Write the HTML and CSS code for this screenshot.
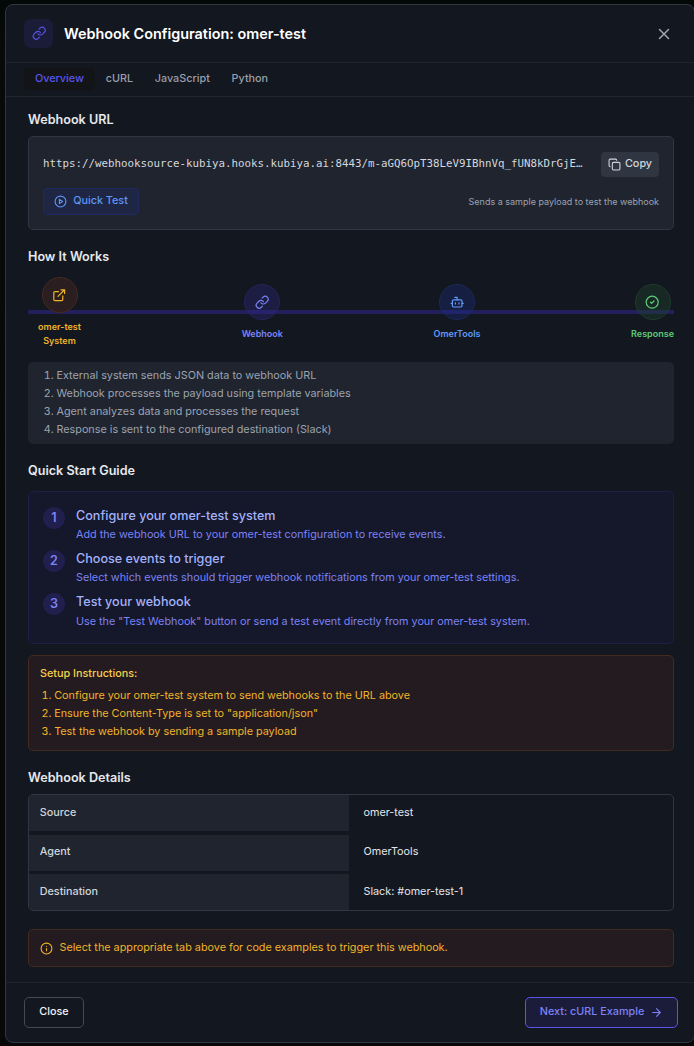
FILE: index.html
```html
<!DOCTYPE html>
<html lang="en">
<head>
<meta charset="utf-8">
<title>Webhook Configuration</title>
<link rel="stylesheet" href="styles.css">
</head>
<body>
<svg width="0" height="0" class="defs">
  <symbol id="link" viewBox="0 0 24 24"><path d="M10 13a5 5 0 0 0 7.54.54l3-3a5 5 0 0 0-7.07-7.07l-1.72 1.71"/><path d="M14 11a5 5 0 0 0-7.54-.54l-3 3a5 5 0 0 0 7.07 7.07l1.71-1.71"/></symbol>
</svg>
<main class="modal">
  <header class="header">
    <span class="badge"><svg class="icon i15"><use href="#link"/></svg></span>
    <h1 class="title">Webhook Configuration: omer-test</h1>
    <svg class="icon close-x" viewBox="0 0 24 24"><path d="M18 6 6 18M6 6l12 12"/></svg>
  </header>
  <nav class="tabs">
    <span class="tab active">Overview</span><span class="tab">cURL</span><span class="tab">JavaScript</span><span class="tab">Python</span>
  </nav>
  <div class="content">
    <h2 class="heading">Webhook URL</h2>
    <section class="url-box">
      <div class="row">
        <code class="url">https://webhooksource-kubiya.hooks.kubiya.ai:8443/m-aGQ6OpT38LeV9IBhnVq_fUN8kDrGjE…</code>
        <button class="copy"><svg class="icon i14" viewBox="0 0 24 24"><rect x="8" y="8" width="14" height="14" rx="2"/><path d="M4 16c-1.1 0-2-.9-2-2V4c0-1.1.9-2 2-2h10c1.1 0 2 .9 2 2"/></svg><span>Copy</span></button>
      </div>
      <div class="row">
        <button class="quick"><svg class="icon i14" viewBox="0 0 24 24"><circle cx="12" cy="12" r="10"/><path d="m10 8 6 4-6 4z"/></svg><span>Quick Test</span></button>
        <span class="hint">Sends a sample payload to test the webhook</span>
      </div>
    </section>

    <h2 class="heading how">How It Works</h2>
    <section class="flow">
      <div class="step amber"><span class="node"><svg class="icon i15" viewBox="0 0 24 24"><path d="M15 3h6v6M10 14 21 3M18 13v6a2 2 0 0 1-2 2H5a2 2 0 0 1-2-2V8a2 2 0 0 1 2-2h6"/></svg></span><span class="label">omer-test<br>System</span></div>
      <div class="step indigo"><span class="node"><svg class="icon i15"><use href="#link"/></svg></span><span class="label">Webhook</span></div>
      <div class="step blue"><span class="node"><svg class="icon i15" viewBox="0 0 24 24"><path d="M12 8V4H8"/><rect x="4" y="8" width="16" height="12" rx="2"/><path d="M2 14h2M20 14h2M15 13v2M9 13v2"/></svg></span><span class="label">OmerTools</span></div>
      <div class="step green"><span class="node"><svg class="icon i15" viewBox="0 0 24 24"><circle cx="12" cy="12" r="10"/><path d="m9 12 2 2 4-4"/></svg></span><span class="label">Response</span></div>
    </section>
    <ol class="summary">
      <li>External system sends JSON data to webhook URL</li>
      <li>Webhook processes the payload using template variables</li>
      <li>Agent analyzes data and processes the request</li>
      <li>Response is sent to the configured destination (Slack)</li>
    </ol>

    <h2 class="heading guide-heading">Quick Start Guide</h2>
    <section class="guide">
      <div class="guide-item"><span class="num">1</span><div><h3>Configure your omer-test system</h3><p>Add the webhook URL to your omer-test configuration to receive events.</p></div></div>
      <div class="guide-item"><span class="num">2</span><div><h3>Choose events to trigger</h3><p>Select which events should trigger webhook notifications from your omer-test settings.</p></div></div>
      <div class="guide-item"><span class="num">3</span><div><h3>Test your webhook</h3><p>Use the "Test Webhook" button or send a test event directly from your omer-test system.</p></div></div>
    </section>
    <section class="setup">
      <h3>Setup Instructions:</h3>
      <ol>
        <li>Configure your omer-test system to send webhooks to the URL above</li>
        <li>Ensure the Content-Type is set to "application/json"</li>
        <li>Test the webhook by sending a sample payload</li>
      </ol>
    </section>

    <h2 class="heading details-heading">Webhook Details</h2>
    <dl class="details">
      <dt>Source</dt><dd>omer-test</dd>
      <dt class="mid">Agent</dt><dd class="mid">OmerTools</dd>
      <dt>Destination</dt><dd>Slack: #omer-test-1</dd>
    </dl>
    <section class="notice"><svg class="icon i14" viewBox="0 0 24 24"><circle cx="12" cy="12" r="10"/><path d="M12 16v-4M12 8h.01"/></svg><span>Select the appropriate tab above for code examples to trigger this webhook.</span></section>
  </div>
  <footer class="footer">
    <button class="btn">Close</button>
    <button class="btn next"><span>Next: cURL Example</span><svg class="icon i14" viewBox="0 0 24 24"><path d="M5 12h14M12 5l7 7-7 7"/></svg></button>
  </footer>
</main>
</body>
</html>
```
FILE: styles.css
```css
* { box-sizing: border-box; }
body {
  margin: 0;
  width: 694px;
  height: 1046px;
  overflow: hidden;
  padding: 4px 0 0 5px;
  background: linear-gradient(#040807, #08090b 60px, #07080a 500px, #08080a);
  font: 500 10.8px/16px Inter, sans-serif;
  color: #e2e5ea;
}
h1, h2, h3, p, ol, dl, dd { margin: 0; padding: 0; }
button { font: inherit; color: inherit; margin: 0; padding: 0; }
.defs { position: absolute; }
.modal {
  width: 690px;
  height: 1039px;
  border: 1px solid #2f3642;
  border-radius: 8px;
  background: #131720;
  display: flex;
  flex-direction: column;
}
.icon { flex: none; fill: none; stroke: currentColor; stroke-width: 2; stroke-linecap: round; stroke-linejoin: round; }
.i14 { width: 13px; height: 13px; }
.i15 { width: 14.4px; height: 14.4px; }

.header { height: 58px; flex: none; border-bottom: 1px solid #1f2430; padding: 0 21px 0 18px; display: flex; align-items: center; }
.badge { width: 29px; height: 29px; border-radius: 7px; background: #1b1c38; color: #5552e4; display: grid; place-items: center; }
.badge .icon { margin-left: 1px; }
.title { font-size: 14.4px; font-weight: 600; color: #fff; margin-left: 11px; }
.close-x { width: 18px; height: 18px; margin-left: auto; color: #a0a5b0; }
.tabs { height: 34px; flex: none; border-bottom: 1px solid #1f2430; padding: 5px 0 0 18px; display: flex; }
.tab { height: 22px; line-height: 21px; padding: 0 10.9px; color: #9a9fab; border-radius: 5px; }
.tab.active { color: #5a54ee; background: #131418; }

.content { padding: 14px 20px 0 22px; width: 688px; height: 885px; flex: none; }
.heading { font-size: 12.6px; line-height: 18px; font-weight: 600; color: #e6e8ec; }
.url-box { height: 94px; margin-top: 7px; border: 1px solid #2f3643; border-radius: 5px; background: #1f242f; padding: 15px 14px 0; }
.row { display: flex; justify-content: space-between; align-items: center; }
.row + .row { margin-top: 11px; }
.url { font: 10.8px/16px "DejaVu Sans Mono", monospace; color: #d4d7dd; margin-top: -2px; }
.copy { width: 58px; height: 25px; border: 0; border-radius: 4px; background: #2f3541; color: #d1d5db; display: flex; align-items: center; justify-content: center; gap: 4px; }
.quick { width: 96px; height: 27px; border: 1px solid #1f2b60; border-radius: 4px; background: #1e2644; color: #5f96f4; display: flex; align-items: center; justify-content: center; gap: 6px; }
.copy span, .quick span { margin-top: -2px; }
.hint { font-size: 9px; font-weight: 400; color: #9ca3af; }

.how { margin-top: 18px; }
.flow { display: flex; justify-content: space-between; align-items: center; height: 71px; margin-top: 11px; background: linear-gradient(#221f5c, #221f5c) 0 33px / 100% 4px no-repeat; }
.step { display: flex; flex-direction: column; align-items: center; }
.step.amber { width: 63px; color: #f0b429; }
.step.indigo { color: #7c83f5; }
.step.blue { color: #609af6; }
.step.green { color: #5ccb78; }
.node { width: 36px; height: 36px; border-radius: 50%; display: grid; place-items: center; border: 1px solid; }
.amber .node { background: #2b1e20; border-color: #48291d; }
.indigo .node { background: rgba(49, 44, 145, .3); border-color: #25235a; }
.blue .node { background: rgba(30, 50, 145, .3); border-color: #1c2858; }
.green .node { background: rgba(32, 70, 45, .4); border-color: #203a2b; }
.label { font-size: 9px; line-height: 14px; margin-top: 7px; text-align: center; font-weight: 570; }
.summary { height: 82px; margin-top: 14px; border-radius: 5px; background: #1f242f; padding: 5px 0 0 28.5px; font-weight: 400; line-height: 18px; color: #9ca3af; }
.guide-heading { margin-top: 18px; }
.guide { height: 153px; margin-top: 11px; border: 1px solid #1e1e48; border-radius: 5px; background: #15172a; padding: 15px 14px 0; }
.guide-item { display: flex; height: 43.2px; gap: 11px; }
.num { flex: none; width: 22px; height: 22px; border-radius: 50%; background: #211f4e; color: #7c83f5; font-size: 12.6px; line-height: 21px; font-weight: 600; text-align: center; }
.guide h3 { font-size: 12.6px; line-height: 18px; font-weight: 500; color: #a3b2fa; }
.guide p { margin-top: 1.2px; font-weight: 400; line-height: 18px; color: #7c83f5; }
.setup { height: 96px; margin-top: 11px; border: 1px solid #45281e; border-radius: 5px; background: #231b20; padding: 10px 11px; color: #f0b429; }
.setup h3 { font-size: 10.8px; line-height: 16px; font-weight: 550; color: #f8cf4a; }
.setup ol { margin-top: 5px; padding-left: 14.2px; line-height: 18px; font-weight: 400; }
.details-heading { margin-top: 18px; }
.details { height: 117px; margin-top: 7px; border: 1px solid #303744; border-radius: 5px; overflow: hidden; display: grid; grid-template-columns: 320px 1fr; grid-template-rows: 36px 36px 36px; row-gap: 3.5px; line-height: 35px; }
.details .mid { line-height: 34px; }
.details dt { background: #1f242f; padding-left: 10.7px; color: #d1d5db; }
.details dd { padding-left: 14.5px; font-weight: 400; }
.notice { height: 38px; margin-top: 18px; border: 1px solid #45281e; border-radius: 5px; background: #231b20; padding-left: 11px; display: flex; align-items: center; gap: 6.5px; color: #f0b429; font-weight: 400; }
.notice span { margin-top: -1px; }
.footer { flex: 1; border-top: 1px solid #1f2430; padding: 14px 16px 0 18px; display: flex; justify-content: space-between; align-items: flex-start; }
.btn { height: 31px; width: 60px; border: 1px solid #434955; border-radius: 5px; background: transparent; color: #f3f4f6; line-height: 27px; padding-bottom: 2px; }
.next { width: 153px; border-color: #5b54ea; background: #1b1c3a; color: #7c83f5; display: flex; justify-content: center; gap: 6px; }
.next .icon { margin-top: 8px; }
```
